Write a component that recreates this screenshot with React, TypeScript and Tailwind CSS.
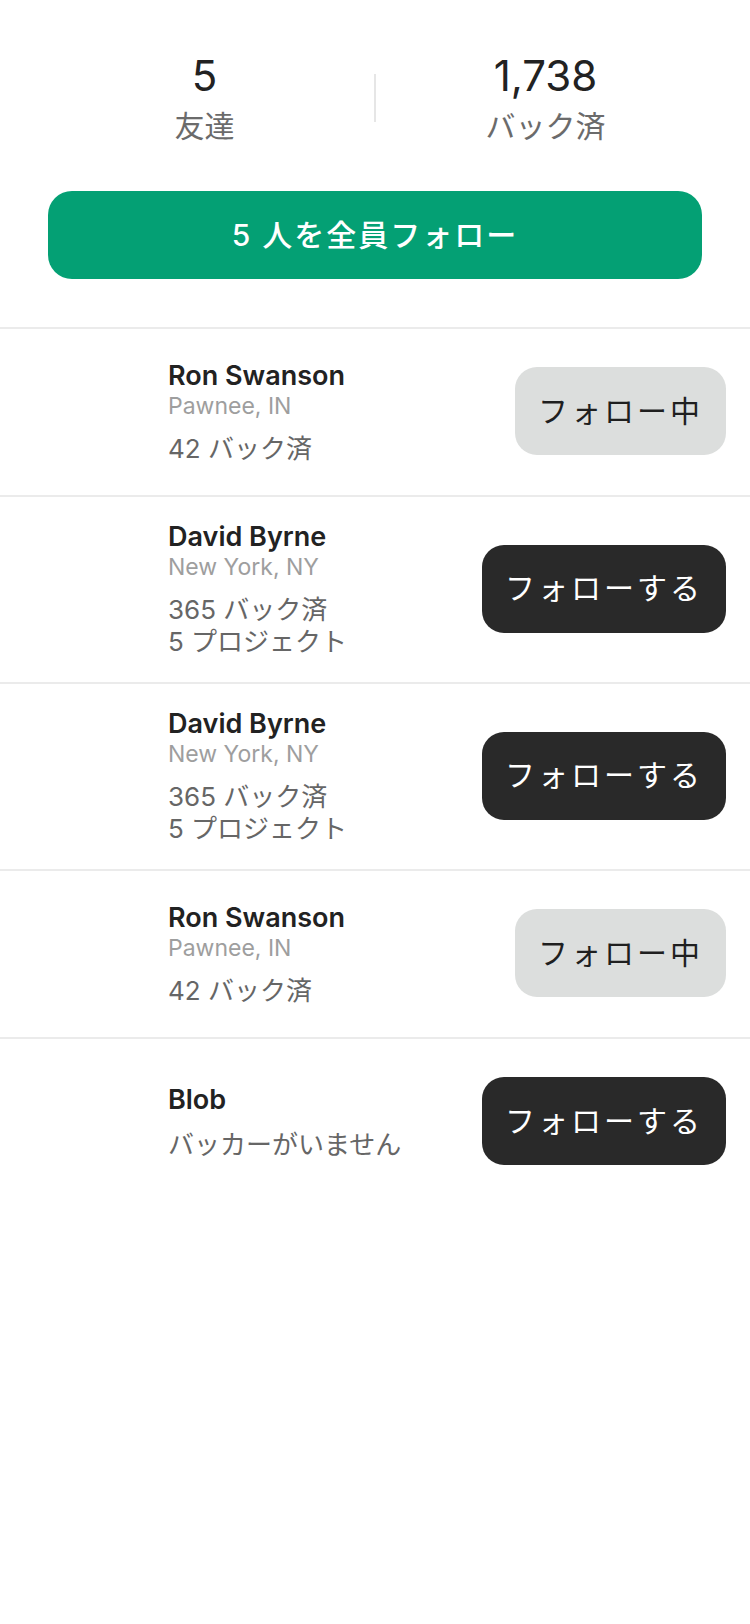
import React from "react";

type Person = {
  name: string;
  location?: string;
  lines: string[];
  following: boolean;
};

const people: Person[] = [
  { name: "Ron Swanson", location: "Pawnee, IN", lines: ["42 バック済"], following: true },
  { name: "David Byrne", location: "New York, NY", lines: ["365 バック済", "5 プロジェクト"], following: false },
  { name: "David Byrne", location: "New York, NY", lines: ["365 バック済", "5 プロジェクト"], following: false },
  { name: "Ron Swanson", location: "Pawnee, IN", lines: ["42 バック済"], following: true },
  { name: "Blob", lines: ["バッカーがいません"], following: false },
];

function Row({ p, last }: { p: Person; last: boolean }) {
  return (
    <div
      className={
        "flex items-center pl-[20px] pr-[24px] py-[20px] " +
        (last ? "" : "border-b-2 border-[#ebebeb]")
      }
    >
      <div className="w-[128px] h-[126px] shrink-0" />
      <div className="ml-[20px] flex-1 min-w-0 pt-[4px] pb-[4px]">
        <div className="text-[27px] leading-[32px] font-semibold text-[#222222]">{p.name}</div>
        {p.location && (
          <div className="text-[23px] leading-[28px] text-[#9e9e9e]">{p.location}</div>
        )}
        <div className="mt-[13px] text-[26px] leading-[32px] text-[#666666]">
          {p.lines.map((l, i) => (
            <div key={i}>{l}</div>
          ))}
        </div>
      </div>
      {p.following ? (
        <button className="mb-[2px] h-[88px] px-[23px] rounded-[22px] bg-[#dcdedd] text-[#1f1f1f] text-[30px] tracking-[3px] shrink-0">
          フォロー中
        </button>
      ) : (
        <button className="mb-[2px] h-[88px] px-[23px] rounded-[22px] bg-[#292929] text-white text-[30px] tracking-[3px] shrink-0">
          フォローする
        </button>
      )}
    </div>
  );
}

export default function App() {
  return (
    <div className="w-[750px] min-h-[1624px] bg-white font-['Inter','Noto_Sans_CJK_JP',sans-serif]">
      <div className="flex items-center px-[35px] pt-[52px]">
        <div className="flex-1 flex flex-col items-center">
          <div className="text-[42px] leading-[48px] text-[#222222]">5</div>
          <div className="mt-[8px] text-[30px] leading-[36px] text-[#6b6b6b]">友達</div>
        </div>
        <div className="w-[2px] h-[48px] bg-[#e6e6e6]" />
        <div className="flex-1 flex flex-col items-center">
          <div className="text-[42px] leading-[48px] text-[#222222]">1,738</div>
          <div className="mt-[8px] text-[30px] leading-[36px] text-[#6b6b6b]">バック済</div>
        </div>
      </div>
      <div className="mx-[48px] mt-[47px] h-[88px] rounded-[24px] bg-[#04a074] flex items-center justify-center text-white text-[30px] font-medium tracking-[2px]">
        5 人を全員フォロー
      </div>
      <div className="mt-[48px] border-t-2 border-[#ebebeb]">
        {people.map((p, i) => (
          <Row key={i} p={p} last={i === people.length - 1} />
        ))}
      </div>
    </div>
  );
}
